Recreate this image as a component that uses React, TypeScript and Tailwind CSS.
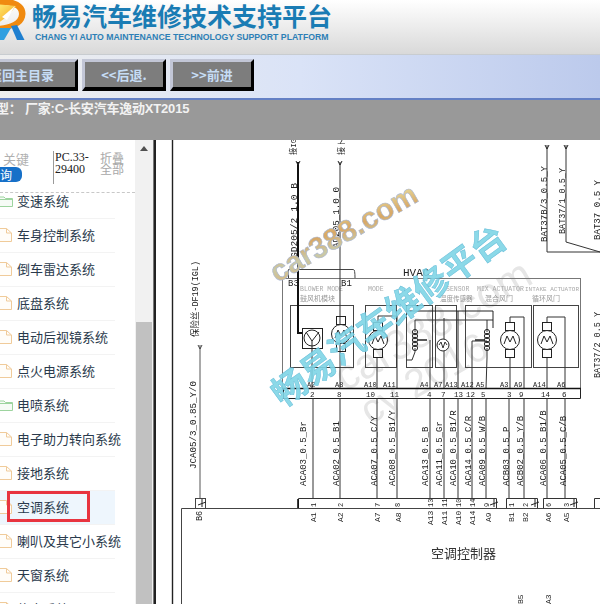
const cjk = '"Noto Sans CJK SC", sans-serif';

type Item = { t: string; kind: 'folder' | 'page'; active?: boolean };
const items: Item[] = [
  { t: '变速系统', kind: 'folder' },
  { t: '车身控制系统', kind: 'page' },
  { t: '倒车雷达系统', kind: 'page' },
  { t: '底盘系统', kind: 'page' },
  { t: '电动后视镜系统', kind: 'page' },
  { t: '点火电源系统', kind: 'page' },
  { t: '电喷系统', kind: 'folder' },
  { t: '电子助力转向系统', kind: 'page' },
  { t: '接地系统', kind: 'page' },
  { t: '空调系统', kind: 'page', active: true },
  { t: '喇叭及其它小系统', kind: 'page' },
  { t: '天窗系统', kind: 'page' },
  { t: '信息系统', kind: 'page' },
];

function TreeIcon({ kind }: { kind: 'folder' | 'page' }) {
  return kind === 'folder' ? (
    <svg width="14" height="14" viewBox="0 0 14 14" className="shrink-0 -ml-[1px]">
      <path d="M0.5 3 H5 L6.5 4.5 H13.5 V12.5 H0.5 Z" fill="#f6fbf6" stroke="#9dd49f" />
      <path d="M0.5 5.5 H13.5" stroke="#9dd49f" />
    </svg>
  ) : (
    <svg width="14" height="16" viewBox="0 0 14 16" className="shrink-0 -ml-[1px]">
      <path d="M-2 1.5 H7.5 L12.5 6 V14.5 H-2 Z" fill="#fffdf9" stroke="#f0cb9a" />
      <path d="M7.5 1.5 V6 H12.5" fill="none" stroke="#f0cb9a" />
    </svg>
  );
}

function V({ x, y, t, len, size = 8.5, fill = '#222' }: { x: number; y: number; t: string; len?: number; size?: number; fill?: string }) {
  return (
    <text
      x={x}
      y={y}
      transform={`rotate(-90 ${x} ${y})`}
      fontFamily='"Liberation Mono", "Noto Sans CJK SC", monospace'
      fontSize={size}
      fill={fill}
      textLength={len}
      lengthAdjust={len ? 'spacingAndGlyphs' : undefined}
    >
      {t}
    </text>
  );
}

function H({ x, y, t, size = 7, fill = '#222' }: { x: number; y: number; t: string; size?: number; fill?: string }) {
  return (
    <text x={x} y={y} fontFamily='"Liberation Mono", "Noto Sans CJK SC", monospace' fontSize={size} fill={fill}>
      {t}
    </text>
  );
}

function Motor({ cx, cy, r = 9.5 }: { cx: number; cy: number; r?: number }) {
  return (
    <g fill="none" stroke="#222" strokeWidth="1">
      <rect x={cx - 4.5} y={cy - r - 8} width="9" height="8" />
      <rect x={cx - 4.5} y={cy + r} width="9" height="8" />
      <circle cx={cx} cy={cy} r={r} fill="#fff" />
      <path d={`M${cx - 6} ${cy + 4} L${cx - 3} ${cy - 4} L${cx} ${cy + 2} L${cx + 3} ${cy - 4} L${cx + 6} ${cy + 4}`} />
    </g>
  );
}

function Coil({ x, y, flip }: { x: number; y: number; flip?: boolean }) {
  const d = flip ? 1 : -1;
  return (
    <g fill="none" stroke="#222" strokeWidth="1">
      {[0, 1, 2, 3, 4].map((i) => (
        <circle key={i} cx={x} cy={y - 8 + i * 4} r="2.6" />
      ))}
      <path d={`M${x - 3 * d} ${y} H${x - 12 * d}`} strokeWidth="1.5" />
    </g>
  );
}

const lowerLabels: [number, string][] = [
  [306, 'ACA03_0.5_Br'],
  [339, 'ACA02_0.5_B1'],
  [377, 'ACA07_0.5_C/Y'],
  [395, 'ACA08_0.5_B1/Y'],
  [428, 'ACA13_0.5_B'],
  [442, 'ACA11_0.5_Gr'],
  [456, 'ACA10_0.5_B1/R'],
  [471, 'ACA14_0.5_C/R'],
  [485, 'ACA09_0.5_W/B'],
  [509, 'ACB03_0.5_P'],
  [523, 'ACB02_0.5_Y/B'],
  [546, 'ACA06_0.5_B1/B'],
  [566, 'ACA05_0.5_C/B'],
];
const wires = [313, 340, 377, 397, 430, 444, 458, 472, 486, 509, 524, 547, 565];
const upperPins: [number, string][] = [
  [307, 'A2'], [335, 'A8'], [364, 'A10'], [383, 'A11'], [420, 'A4'], [434, 'A7'], [445, 'A13'], [461, 'A12'], [476, 'A5'], [500, 'A3'], [514, 'A9'], [533, 'A14'], [557, 'A6'],
];
const midNums: [number, string][] = [
  [310, '2'], [337, '8'], [366, '10'], [390, '11'], [427, '4'], [441, '7'], [454, '13'], [466, '12'], [481, '5'], [507, '3'], [519, '9'], [541, '14'], [562, '6'],
];
const pinLabels: [number, string][] = [
  [316, 'A1'], [343, 'A2'], [380, 'A7'], [401, 'A8'], [433, 'A13'], [447, 'A11'], [461, 'A10'], [475, 'A14'], [491, 'A9'], [514, 'B1'], [528, 'B2'], [551, 'A6'], [569, 'A5'],
];
const connNums: [number, string][] = [
  [313, '1'], [340, '2'], [377, '7'], [397, '8'], [430, '13'], [444, '11'], [458, '10'], [472, '14'], [486, '9'], [511, '1'], [525, '2'], [548, '6'], [566, '3'],
];

function Diagram() {
  return (
    <svg viewBox="156 140 444 464" className="block w-[444px] h-[464px] blur-[0.45px]">
      {/* faint watermark */}
      <g fontFamily='"Liberation Sans", sans-serif' fill="#e6e6e6" fontSize="42">
        <text x="345" y="392" transform="rotate(-30 345 392)">car388.com</text>
        <text x="370" y="425" transform="rotate(-30 370 425)" fontSize="40">cy 2016</text>
      </g>

      {/* frame */}
      <path d="M172.5 140 V604" stroke="#222" strokeWidth="1.4" />
      <path d="M181.5 604 V508.5 H600" fill="none" stroke="#444" />

      {/* left feed */}
      <path d="M200 345 V498" stroke="#555" />
      <path d="M198 345 L200 349 L202 345" fill="none" stroke="#444" />
      <rect x="195.5" y="498.5" width="10" height="10" fill="none" stroke="#444" />
      <V x={198} y={337} t="保险丝-DF19(IGL)" len={76} size={9} />
      <V x={196} y={469} t="JCA05/3_0.85_Y/0" len={88} size={9} />
      <V x={202} y={521} t="B6" />

      {/* HVAC */}
      <text x="403" y="276" fontFamily='"Liberation Mono", monospace' fontSize="11" fill="#222">HVAC</text>
      <path d="M288.5 278 V269.5 H353.5 Q355 269.5 355 278" fill="none" stroke="#444" />
      <rect x="282.5" y="278.5" width="298" height="110" fill="none" stroke="#777" />
      <path d="M282 388.5 H581" stroke="#111" strokeWidth="1.6" />
      <path d="M283.5 388.5 V398.5 H580.5 V388.5" fill="none" stroke="#222" />

      <g fill="none" stroke="#444">
        <rect x="290.5" y="305.5" width="63" height="62" />
        <rect x="365.5" y="305.5" width="31" height="62" />
        <rect x="406.5" y="305.5" width="26" height="62" />
        <rect x="435.5" y="305.5" width="21" height="62" />
        <rect x="465.5" y="305.5" width="66" height="62" />
        <rect x="533.5" y="305.5" width="45" height="62" />
      </g>

      <g>
        <H x={300} y={291} t="BLOWER MODE" size={6.5} fill="#aaa" />
        <H x={300} y={301} t="鼓风机模块" size={7} fill="#999" />
        <H x={368} y={291} t="MODE" size={6.5} fill="#aaa" />
        <H x={446} y={291} t="SENSOR" size={6.5} fill="#aaa" />
        <H x={440} y={301} t="温度传感器" size={6.5} fill="#999" />
        <H x={477} y={291} t="MIX ACTUATOR" size={6.5} fill="#aaa" />
        <H x={485} y={301} t="混合风门" size={7} fill="#999" />
        <H x={525} y={291} t="INTAKE ACTUATOR" size={6} fill="#aaa" />
        <H x={532} y={301} t="循环风门" size={7} fill="#999" />
      </g>

      {/* power wires */}
      <path d="M298 162 V333 H303" fill="none" stroke="#111" strokeWidth="2" />
      <path d="M340 162 V388" stroke="#333" />
      <path d="M296 161 L298 165 L300 161 M338 161 L340 165 L342 161" fill="none" stroke="#222" />
      <V x={296} y={155} t="接IG" len={16} size={8} />
      <V x={344} y={155} t="接卜" len={16} size={8} />
      <V x={297} y={258} t="GD205/2_1.0_B" len={75} size={9} />
      <V x={339} y={248} t="AD205_1.0_0" len={61} size={9} />
      <H x={288} y={286} t="B3" size={9} />
      <H x={341} y={286} t="B1" size={9} />

      {/* blower */}
      <rect x="302.5" y="328.5" width="20" height="20" fill="#fff" stroke="#222" />
      <circle cx="312" cy="338" r="8" fill="none" stroke="#222" />
      <path d="M306 332 L312 341 L319 332 M312 341 V388" fill="none" stroke="#222" />
      <Motor cx={341} cy={334} />

      {/* mode motor */}
      <Motor cx={378} cy={340} />
      <path d="M378 322 V316 H397 V388 M377 358 V388" fill="none" stroke="#333" />

      {/* coils */}
      <Coil x={415} y={340} />
      <path d="M406 360 H412 L415 352 V348 M415 332 V320 H493 M430 340 V388" fill="none" stroke="#333" />
      <rect x="437" y="339" width="12" height="12" rx="6" fill="none" stroke="#222" />
      <path d="M439 345 L441 342 L443 348 L445 342 L447 345 M444 318 V339 M444 351 V388" fill="none" stroke="#333" />
      <path d="M407 311 H493 V328 M458 311 V388" fill="none" stroke="#222" />
      <Coil x={487} y={340} flip />
      <path d="M472 388 V341 H487 M487 320 V332 M487 348 V358 L486 388" fill="none" stroke="#333" />

      {/* right motors */}
      <Motor cx={510} cy={340} />
      <path d="M510 322 V317 H524 V388 M510 358 V388" fill="none" stroke="#333" />
      <Motor cx={547} cy={340} />
      <path d="M547 322 V317 H565 V388 M547 358 V388" fill="none" stroke="#333" />

      {/* pins, upper */}
      {upperPins.map(([x, t]) => (
        <H key={t} x={x} y={387} t={t} size={7} />
      ))}
      {midNums.map(([x, t], i) => (
        <H key={i} x={x} y={397} t={t} size={7.5} />
      ))}

      {/* wires */}
      {wires.map((x) => (
        <path key={x} d={`M${x} 398 V498`} stroke="#333" />
      ))}
      {lowerLabels.map(([x, t]) => (
        <V key={t} x={x} y={486} t={t} len={t.length * 5.4} size={9} />
      ))}

      {/* connectors */}
      <g fill="none" stroke="#333">
        <path d="M298.5 508 V498.5 H496.5 V508" />
        <path d="M506.5 508 V498.5 H537.5 V508" />
        <path d="M543.5 508 V498.5 H576.5 V508" />
        <path d="M594.5 508 V498.5 H600" />
      </g>
      <path d="M298 499 V508" stroke="#111" strokeWidth="1.6" />
      {connNums.map(([x, t], i) => (
        <V key={i} x={x + 3} y={507} t={t} size={7} />
      ))}
      {[496, 537, 576, 204].map((x) => (
        <path key={x} d={`M${x - 6} 505 L${x + 2} 502 M${x - 2} 499 V507`} stroke="#222" />
      ))}
      {pinLabels.map(([x, t]) => (
        <V key={t} x={x} y={t.length > 2 ? 525 : 522} t={t} size={8} />
      ))}
      <text x="431" y="558" fontFamily={cjk} fontSize="13" fill="#333">空调控制器</text>
      <V x={523} y={604} t="B5" size={8} />
      <V x={551} y={604} t="A3" size={8} />

      {/* right side */}
      <path d="M547 145 V252 H600 M566 145 V242 L600 252" fill="none" stroke="#333" />
      <path d="M545 145 L547 149 L549 145 M564 145 L566 149 L568 145" fill="none" stroke="#222" />
      <V x={547} y={242} t="BAT37B/3_0.5_Y" len={76} size={9} />
      <V x={565} y={234} t="BAT37/1_0.5_Y" len={66} size={9} />
      <V x={600} y={240} t="BAT37_0.5_Y" len={60} size={9} />
      <V x={600} y={378} t="BAT37/2_0.5_Y" len={66} size={9} />

      {/* brand watermarks */}
      <defs>
        <linearGradient id="wm" x1="0" y1="1" x2="1" y2="0">
          <stop offset="0" stopColor="#d9b57a" />
          <stop offset="0.3" stopColor="#c9c9a8" />
          <stop offset="0.55" stopColor="#d8a866" />
          <stop offset="0.8" stopColor="#e3cf90" />
          <stop offset="1" stopColor="#c79a66" />
        </linearGradient>
      </defs>
      <text
        x="277"
        y="283"
        transform="rotate(-30 277 283)"
        fontFamily='"Liberation Sans", sans-serif'
        fontWeight="700"
        fontSize="30"
        fill="url(#wm)"
        stroke="#a9b6d2"
        strokeWidth="0.6"
      >
        car388.com
      </text>
      <text
        x="283"
        y="408"
        transform="rotate(-36 283 408)"
        fontFamily={cjk}
        fontWeight="700"
        fontSize="35"
        fill="#7ed5e6"
        fillOpacity="0.9"
        stroke="#66bcd8"
        strokeWidth="0.5"
      >
        畅易汽车维修平台
      </text>
    </svg>
  );
}

export default function App() {
  return (
    <div className="w-[600px] h-[604px] overflow-hidden flex flex-col bg-white" style={{ fontFamily: cjk }}>
      {/* header */}
      <header className="h-[55px] shrink-0 flex bg-gradient-to-b from-white to-[#d9d9d9] border-b border-[#c8ccd0]">
        <svg width="32" height="44" viewBox="0 0 32 44" className="shrink-0">
          <defs>
            <linearGradient id="sun" x1="0" y1="0" x2="1" y2="1">
              <stop offset="0" stopColor="#fff27a" />
              <stop offset="1" stopColor="#f59a12" />
            </linearGradient>
          </defs>
          <path d="M-6 0 C10 -4 26 2 25.5 14 C25 24 16 28 8 29 L-2 29 L-2 26 C8 25 19 22 19 14 C19 6 8 4 -6 6 Z" fill="#f08a10" />
          <path d="M-6 4 L16 6 L8 16 L-6 26 Z" fill="url(#sun)" />
          <path d="M2 17 L15 6 L7 20 Z" fill="#ffffff" />
          <path d="M-2 28 H11 L4 40 H-4 Z" fill="#2f9fe0" />
          <path d="M11 26 L17 25 L24.5 40 H17 Z" fill="#1e7fd0" />
        </svg>
        <div className="flex flex-col">
          <div className="h-[32px] text-[25px] leading-[32px] font-bold text-[#1a7cb4] whitespace-nowrap -mt-[1px]">畅易汽车维修技术支持平台</div>
          <div
            className="ml-[3px] text-[8.7px] leading-[12px] font-bold text-[#2d7fb6] whitespace-nowrap"
            style={{ fontFamily: '"Liberation Sans", sans-serif' }}
          >
            CHANG YI AUTO MAINTENANCE TECHNOLOGY SUPPORT PLATFORM
          </div>
        </div>
      </header>

      {/* nav */}
      <nav className="h-[43px] shrink-0 flex items-start gap-[4px] pt-[4px] bg-gradient-to-r from-[#eeeeee] via-[#dae3f7] to-[#bccaec] overflow-hidden">
        {[
          { t: '返回主目录', w: 'w-[113px] -ml-[35px]' },
          { t: '<<后退.', w: 'w-[84px]' },
          { t: '>>前进', w: 'w-[84px]' },
        ].map((b) => (
          <button
            key={b.t}
            className={`${b.w} h-[32px] shrink-0 bg-[#7d7d7d] border-t-[3px] border-l-[3px] border-r-[3px] border-b-[4px] border-t-[#c2c6d6] border-l-[#c2c6d6] border-r-black border-b-black text-[13px] font-bold text-[#c6dcf5] leading-none`}
          >
            {b.t}
          </button>
        ))}
      </nav>

      {/* blue line */}
      <div className="h-[2px] shrink-0 bg-[#6480c4]" />

      {/* info */}
      <div
        className="h-[40px] shrink-0 bg-[#999999] text-[13px] leading-[18px] text-[#f2f2f2] whitespace-nowrap -ml-[4px] font-semibold tracking-[-0.2px]"
        style={{ fontFamily: '"Liberation Sans", "Noto Sans CJK SC", sans-serif' }}
      >
        型： 厂家:C-长安汽车逸动XT2015
      </div>

      {/* body */}
      <div className="flex-1 min-h-0 flex">
        <aside className="w-[135px] shrink-0 flex flex-col overflow-hidden bg-white">
          <div className="h-[53px] shrink-0 border-b border-dashed border-[#c8c8c8] flex pt-[11px]">
            <div className="w-[53px] shrink-0">
              <div className="pl-[3px] text-[13px] leading-[16px] text-[#b0b0b0]">关键</div>
              <div className="w-[22px] h-[15px] bg-[#1670c8] rounded-r-[6px] text-white text-[12px] leading-[15px]">询</div>
            </div>
            <div
              className="w-[47px] h-[33px] shrink-0 border-l border-[#9a9a9a] pl-[1px] text-[12px] leading-[12px] text-[#222]"
              style={{ fontFamily: '"Liberation Serif", serif' }}
            >
              PC.33-
              <br />
              29400
            </div>
            <div className="text-[12px] leading-[11px] text-[#a8a8a8] pt-[1px] w-[26px]">折叠全部</div>
          </div>
          <div className="-mt-[8px] flex flex-col">
            {items.map((it) => (
              <div
                key={it.t}
                className={`relative h-[34px] shrink-0 w-[115px] flex items-center gap-[4px] pb-[2px] border-b border-[#f3f3f3] whitespace-nowrap text-[13px] text-[#2a3a4c] ${
                  it.active ? 'bg-[#eef6fd]' : ''
                }`}
              >
                <TreeIcon kind={it.kind} />
                <span>{it.t}</span>
                {it.active && <div className="absolute left-[7px] top-0 w-[83px] h-[31px] border-[3px] border-[#e8343f]" />}
              </div>
            ))}
          </div>
        </aside>

        {/* scrollbar */}
        <div className="w-[18px] shrink-0 bg-[#f1f1f1] flex flex-col items-center px-[1px]">
          <div className="h-[182px] w-full pt-[6px] flex justify-center shrink-0">
            <div className="w-0 h-0 border-l-[4px] border-r-[4px] border-b-[5px] border-l-transparent border-r-transparent border-b-[#505050]" />
          </div>
          <div className="flex-1 w-full bg-[#c1c1c1]" />
        </div>

        {/* divider */}
        <div className="w-[3px] shrink-0 bg-[#222222] border-l border-[#777777]" />

        <main className="flex-1 min-w-0 overflow-hidden bg-white">
          <Diagram />
        </main>
      </div>
    </div>
  );
}
